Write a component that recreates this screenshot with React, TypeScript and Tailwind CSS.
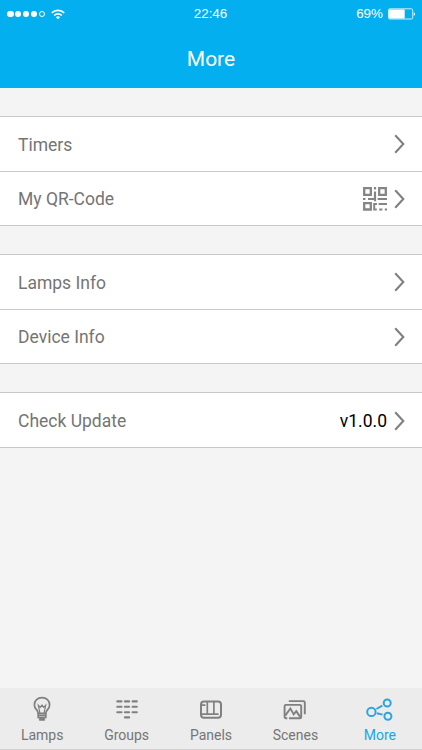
import type { ReactNode } from 'react';

interface RowProps {
  label: string;
  children?: ReactNode;
}

const tabs = [
  { label: 'Lamps', icon: <LampIcon /> },
  { label: 'Groups', icon: <GroupsIcon /> },
  { label: 'Panels', icon: <PanelsIcon /> },
  { label: 'Scenes', icon: <ScenesIcon /> },
  { label: 'More', icon: <MoreIcon />, active: true },
];

function WifiIcon() {
  return (
    <svg width="14" height="11" viewBox="0 0 14 11" fill="none" stroke="white" strokeWidth="1.7">
      <path d="M0.8 3.9a8.8 8.8 0 0 1 12.4 0M3.2 6.5a5.4 5.4 0 0 1 7.6 0" />
      <path d="M7 10.3L4.9 8.2a3 3 0 0 1 4.2 0z" fill="white" stroke="none" />
    </svg>
  );
}

function BatteryIcon() {
  return (
    <svg width="28" height="12" viewBox="0 0 28 12" fill="none">
      <rect x="0.5" y="0.8" width="24.2" height="10.2" rx="1.3" stroke="white" strokeWidth="0.8" />
      <rect x="1" y="1.4" width="15.7" height="9" rx="0.6" fill="white" />
      <path d="M25.7 4.2c1.8.5 1.8 3.1 0 3.6z" fill="white" />
    </svg>
  );
}

function QrIcon() {
  return (
    <svg width="24" height="24" viewBox="0 0 24 24" fill="none" stroke="#858585" strokeWidth="2.3">
      <path d="M1.2 1.2h6.6v6.6H1.2zM16.2 1.2h6.6v6.6h-6.6zM1.2 16.1h6.6v6.4H1.2z" />
      <path d="M12 0v2.4M12 4.6v9.6M0 12h2.4M5 12h7" strokeWidth="2.2" />
      <path d="M14.6 12h9.4M10.2 17h3.8M15.6 17h8.4M11.2 16v7.4M10.2 22.4h3.6M16.2 22.4h3.2M21.8 22.4h2.2" strokeWidth="2" />
    </svg>
  );
}

function Chevron() {
  return (
    <svg width="11" height="20" viewBox="0 0 11 20" fill="none" stroke="#808080" strokeWidth="2.1">
      <path d="M1.2 1.2L9.3 10L1.2 18.8" />
    </svg>
  );
}

function LampIcon() {
  return (
    <svg width="26" height="26" viewBox="0 0 26 26" fill="none" stroke="#808080" strokeWidth="1.7">
      <path d="M9.2 17.3c0-3.5-3.8-4-3.8-8.4C5.4 4.6 8.6 1.7 13 1.7s7.6 2.9 7.6 7.2c0 4.4-3.8 4.9-3.8 8.4z" />
      <path d="M10.9 17L9.3 9.2l2 2.2L13 9.1l1.7 2.3 2-2.2L15.1 17" strokeWidth="1.2" />
      <path d="M9.2 17.3v4.2h7.6v-4.2M9.2 19.4h7.6" />
      <path d="M10.4 21.5h5.2v2.8h-5.2z" fill="#808080" strokeWidth="0.8" />
    </svg>
  );
}

function GroupsIcon() {
  return (
    <svg width="26" height="26" viewBox="0 0 26 26" fill="none" stroke="#808080" strokeWidth="2.1" strokeLinecap="round">
      <path d="M3.3 5.4h4.2M10.9 5.4h4.2M18.6 5.4h4.2M3.3 10.8h4.2M10.9 10.8h4.2M18.6 10.8h4.2M3.3 16.2h4.2M10.9 16.2h4.2M18.6 16.2h4.2M10.9 21.4h4.2" />
    </svg>
  );
}

function PanelsIcon() {
  return (
    <svg width="26" height="26" viewBox="0 0 26 26" fill="none" stroke="#808080">
      <rect x="3" y="5.4" width="20" height="16.3" rx="3" strokeWidth="2" />
      <path d="M3 18.1h17.6M9.3 5.4v12.7M15.9 5.4v12.7M4 9.2h3.4" strokeWidth="1.7" />
    </svg>
  );
}

function ScenesIcon() {
  return (
    <svg width="26" height="26" viewBox="0 0 26 26" fill="none" stroke="#808080" strokeWidth="1.9">
      <path d="M6.8 5.1h14.6c.9 0 1.4.5 1.4 1.4v11.8" />
      <path d="M5.3 22.2H3.9c-.8 0-1.3-.5-1.3-1.3V10.2c0-.8.5-1.3 1.3-1.3h14c.8 0 1.3.5 1.3 1.3v10.7c0 .8-.5 1.3-1.3 1.3H7" />
      <path d="M3.2 19.6l5.2-7.2 3.3 6 2.6-3.2 4 5.9" />
    </svg>
  );
}

function MoreIcon() {
  return (
    <svg className="overflow-visible" width="26" height="26" viewBox="0 0 26 26" fill="none" stroke="#2da5dc" strokeWidth="2">
      <circle cx="4.4" cy="15.9" r="4.2" />
      <circle cx="20.2" cy="7" r="3.5" />
      <circle cx="20.9" cy="20.2" r="3.5" />
      <path d="M9.4 13l5.9-3.3M9.8 17.2l5.8 1.4" />
    </svg>
  );
}

function Row({ label, children }: RowProps) {
  return (
    <div className="flex h-[53px] items-center justify-between pl-[18px] pr-[17px] first:h-[55px]">
      <span className="pt-[2px]">{label}</span>
      <div className="flex items-center gap-[7px]">
        {children}
        <Chevron />
      </div>
    </div>
  );
}

function Section({ children }: { children: ReactNode }) {
  return (
    <section className="mt-7 h-[110px] divide-y divide-[#c8c8c8] border-y border-[#c8c8c8] bg-white last:h-14">
      {children}
    </section>
  );
}

export default function App() {
  return (
    <div className="flex h-[750px] w-full flex-col overflow-hidden bg-[#f4f4f4] font-['Roboto',sans-serif] text-[17.5px] text-[#757575]">
      <header className="h-[88px] shrink-0 bg-[#03afee] text-white">
        <div className="grid h-7 grid-cols-3 items-center pl-[7px] pr-[6px] font-['Liberation_Sans',sans-serif] text-[13.4px]">
          <div className="flex items-center">
            <div className="flex gap-[1.3px]">
              <i className="size-[6.6px] rounded-full bg-white" />
              <i className="size-[6.6px] rounded-full bg-white" />
              <i className="size-[6.6px] rounded-full bg-white" />
              <i className="size-[6.6px] rounded-full bg-white" />
              <i className="size-[6.6px] rounded-full border border-white" />
            </div>
            <div className="ml-[6px]">
              <WifiIcon />
            </div>
          </div>
          <span className="pr-[2px] pt-px text-center">22:46</span>
          <div className="flex items-center justify-end gap-[5px]">
            <span className="pt-px">69%</span>
            <BatteryIcon />
          </div>
        </div>
        <h1 className="flex h-[62px] items-center justify-center pt-[2px] text-[21px]">More</h1>
      </header>

      <main className="flex-1">
        <Section>
          <Row label="Timers" />
          <Row label="My QR-Code">
            <QrIcon />
          </Row>
        </Section>
        <Section>
          <Row label="Lamps Info" />
          <Row label="Device Info" />
        </Section>
        <Section>
          <Row label="Check Update">
            <span className="pt-[2px] text-black">v1.0.0</span>
          </Row>
        </Section>
      </main>

      <nav className="grid h-[62px] shrink-0 grid-cols-5 border-b border-[#d2d2d2] bg-[#ececec] text-sm">
        {tabs.map((tab) => (
          <div
            key={tab.label}
            className={`flex flex-col items-center pt-2 ${tab.active ? 'text-[#16a9e8]' : ''}`}
          >
            {tab.icon}
            <span className="mt-[3px] leading-5">{tab.label}</span>
          </div>
        ))}
      </nav>
    </div>
  );
}
